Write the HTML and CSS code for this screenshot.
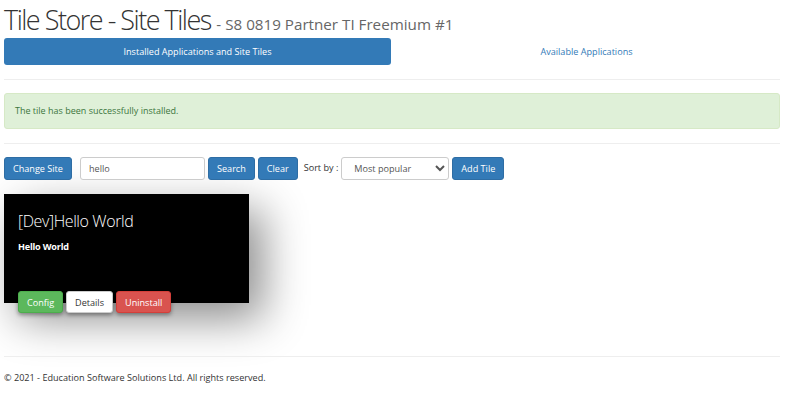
FILE: index.html
```html
<!DOCTYPE html>
<html lang="en">
<head>
    <meta charset="UTF-8">
    <meta name="viewport" content="width=device-width, initial-scale=1.0">
    <title>Tile Store - Site Tiles</title>
    <link rel="stylesheet" href="styles.css">
</head>
<body>
    <div class="page">
        <h1 class="title">Tile Store - Site Tiles <small>- S8 0819 Partner TI Freemium #1</small></h1>

        <ul class="nav-pills">
            <li class="active"><a href="#">Installed Applications and Site Tiles</a></li>
            <li><a href="#">Available Applications</a></li>
        </ul>

        <hr>

        <div class="alert">The tile has been successfully installed.</div>

        <hr>

        <div class="toolbar">
            <button class="btn btn-primary">Change Site</button>
            <input type="text" class="search-box" value="hello">
            <button class="btn btn-primary">Search</button>
            <button class="btn btn-primary">Clear</button>
            <span class="sort-label">Sort by :</span>
            <select class="sort-select">
                <option>Most popular</option>
                <option>Newest</option>
                <option>Name</option>
            </select>
            <button class="btn btn-primary">Add Tile</button>
        </div>

        <div class="tiles">
            <div class="tile">
                <h3 class="tile-title">[Dev]Hello World</h3>
                <p class="tile-text">Hello World</p>
                <div class="tile-buttons">
                    <button class="btn btn-success">Config</button>
                    <button class="btn btn-default">Details</button>
                    <button class="btn btn-danger">Uninstall</button>
                </div>
            </div>
        </div>

        <hr class="footer-rule">

        <footer class="footer">&copy; 2021 - Education Software Solutions Ltd. All rights reserved.</footer>
    </div>
</body>
</html>
```

FILE: styles.css
```css
body {
    margin: 0;
    font-family: "Open Sans", "Noto Sans", sans-serif;
    font-size: 9.1px;
    color: #333;
    background-color: white;
}
.page {
    width: 776px;
    margin-left: 4px;
}
.title {
    margin: 0;
    padding-top: 1px;
    height: 37px;
    font-size: 27px;
    font-weight: 300;
    color: #333;
    letter-spacing: -1.5px;
}
.title small {
    font-size: 15.2px;
    font-weight: 400;
    color: #666;
    letter-spacing: 0;
}
.nav-pills {
    display: flex;
    list-style: none;
    margin: 0;
    padding: 0;
}
.nav-pills li {
    flex: 1;
    margin-right: 2px;
}
.nav-pills li:last-child {
    margin-right: 0;
}
.nav-pills a {
    display: block;
    height: 27px;
    line-height: 27px;
    text-align: center;
    font-size: 9.1px;
    color: #337ab7;
    text-decoration: none;
    border-radius: 3px;
}
.nav-pills .active a {
    background-color: #337ab7;
    color: white;
}
hr {
    border: none;
    border-top: 1px solid #eee;
    margin: 14px 0 13px;
}
.alert {
    height: 36px;
    line-height: 34px;
    padding: 0 10px;
    box-sizing: border-box;
    background-color: #dff0d8;
    border: 1px solid #d6e9c6;
    border-radius: 3px;
    color: #3c763d;
    font-size: 9px;
}
.toolbar {
    display: flex;
    align-items: center;
    gap: 3px;
    height: 23px;
}
.btn {
    height: 23px;
    padding: 0 8px;
    font-family: inherit;
    font-size: 9.1px;
    border-radius: 3px;
    border: 1px solid transparent;
    cursor: pointer;
}
.btn-primary {
    background-color: #337ab7;
    border-color: #2e6da4;
    color: white;
}
.btn-success {
    background-color: #5cb85c;
    border-color: #4cae4c;
    color: white;
}
.btn-danger {
    background-color: #d9534f;
    border-color: #d43f3a;
    color: white;
}
.btn-default {
    background-color: white;
    border-color: #ccc;
    color: #333;
}
.search-box {
    width: 125px;
    height: 23px;
    box-sizing: border-box;
    margin-left: 5px;
    padding: 0 8px;
    font-family: inherit;
    font-size: 9.1px;
    color: #555;
    border: 1px solid #ccc;
    border-radius: 3px;
}
.sort-label {
    margin: 0 0 0 3px;
    font-size: 9.1px;
    position: relative;
    top: -1px;
}
.sort-select {
    width: 108px;
    height: 23px;
    padding: 0 8px;
    font-family: inherit;
    font-size: 9.1px;
    color: #555;
    background-color: white;
    border: 1px solid #ccc;
    border-radius: 3px;
}
.tiles {
    margin-top: 14px;
    height: 162px;
}
.tile {
    width: 245px;
    height: 109px;
    box-sizing: border-box;
    padding: 16px 14px 0;
    background-color: black;
    color: white;
    box-shadow: 14px 16px 44px rgba(0, 0, 0, 0.45);
    display: flex;
    flex-direction: column;
}
.tile-title {
    margin: 0;
    font-size: 16px;
    font-weight: 300;
    letter-spacing: -0.4px;
}
.tile-text {
    margin: 8px 0 0;
    font-size: 9.1px;
    font-weight: 700;
    letter-spacing: -0.2px;
}
.tile-buttons {
    display: flex;
    gap: 3px;
    margin-top: auto;
    margin-bottom: -10px;
}
.tile-buttons .btn {
    height: 22px;
    box-shadow: 0 2px 4px rgba(0, 0, 0, 0.4);
}
.footer-rule {
    margin: 0;
}
.footer {
    padding-top: 14px;
    font-size: 9.1px;
    color: #333;
}
```
